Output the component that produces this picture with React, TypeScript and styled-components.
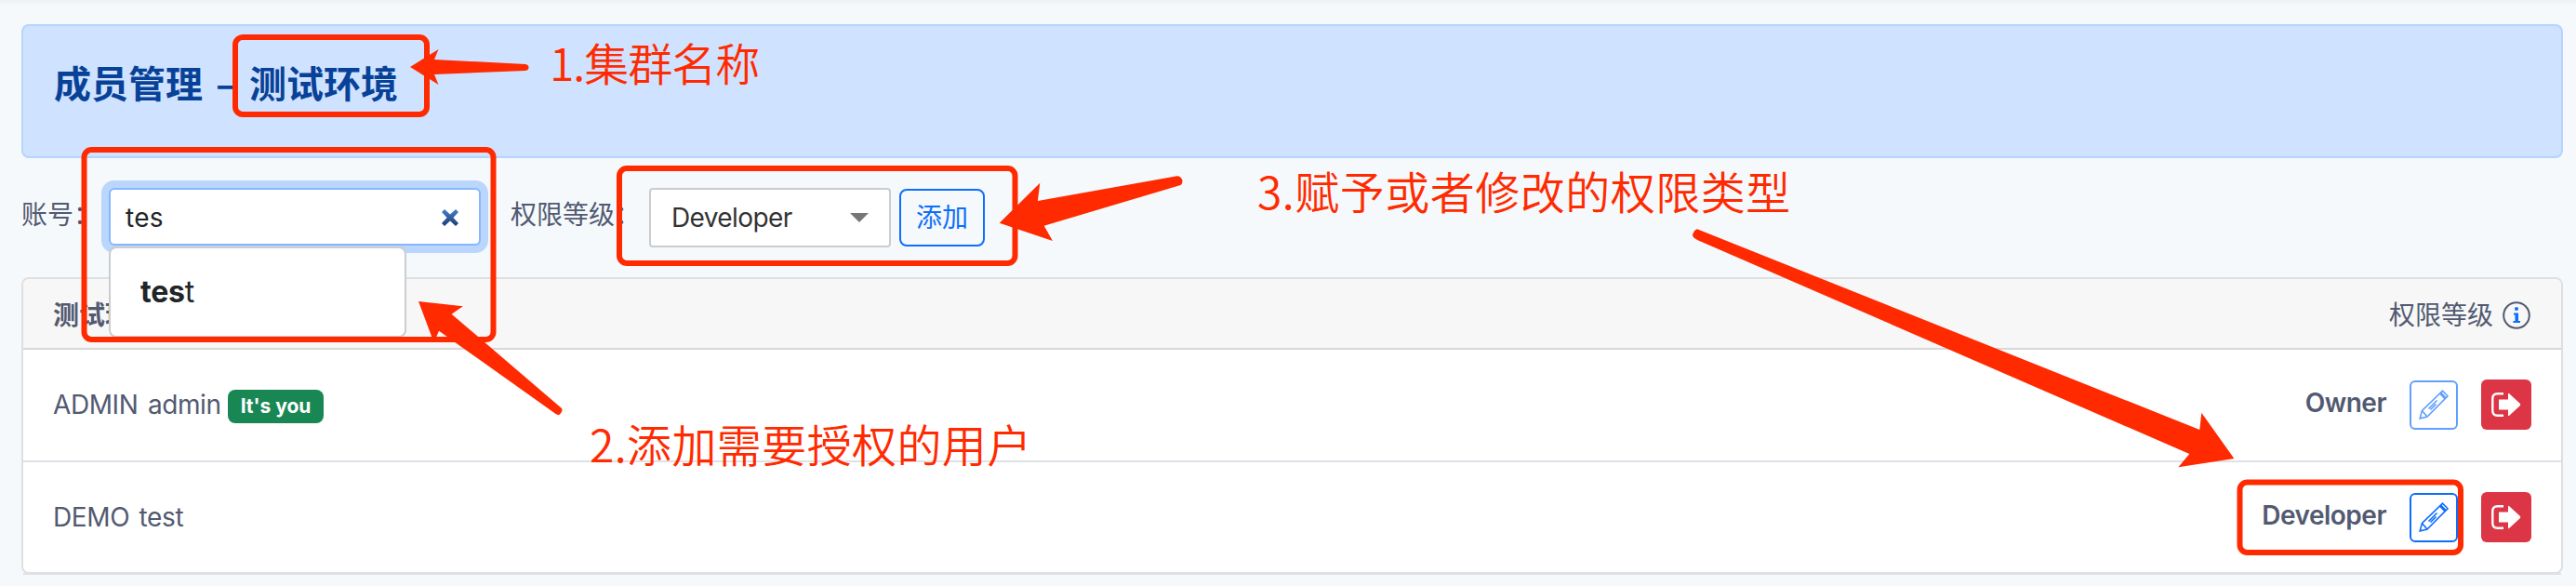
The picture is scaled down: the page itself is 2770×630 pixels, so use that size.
import styled, { createGlobalStyle } from "styled-components";

const ink = "#525a71";
const marker = "#ff2a00";

interface Member {
  name: string;
  level: string;
  isYou?: boolean;
}

const members: Member[] = [
  { name: "ADMIN admin", level: "Owner", isYou: true },
  { name: "DEMO test", level: "Developer" },
];

const PencilIcon = () => (
  <svg width="32" height="32" viewBox="0 0 32 32" fill="none" stroke="currentColor" strokeWidth="1.6">
    <path d="M1.2 30.8 L3.5 22.5 L25.5 1.2 L31 6.8 L9 29 Z" />
    <path d="M3.5 22.5 L9 29 M22.5 4 L28 9.8 M23.6 3 L29.1 8.7 M10.5 20.5 L19.5 11.5 M12.5 21.5 L18.5 15.5" />
  </svg>
);

const ExitIcon = () => (
  <svg width="32" height="26" viewBox="0 0 32 26" fill="none">
    <path d="M13 1.3 H6.5 Q1.3 1.3 1.3 6.5 V19.5 Q1.3 24.7 6.5 24.7 H13" stroke="#fff" strokeWidth="2.4" />
    <path d="M8 7.5 H18 V1.5 Q18 .5 19 1 L31 12 Q31.5 13 31 14 L19 25 Q18 25.5 18 24.5 V18.5 H8 Z" fill="#fff" />
  </svg>
);

const InfoIcon = () => (
  <svg width="30" height="30" viewBox="0 0 30 30" fill="none">
    <circle cx="15" cy="15" r="13.8" stroke={ink} strokeWidth="2" />
    <circle cx="15" cy="8" r="2.1" fill="#0d6efd" />
    <path d="M12 12.5 H17 V21 H19 V23 H11.5 V21 H13.5 V14.5 H12 Z" fill="#0d6efd" />
  </svg>
);

const App = () => (
  <>
    <GlobalStyle />
    <Page>
      <Banner>
        <h1>成员管理 – 测试环境</h1>
      </Banner>
      <Toolbar>
        <Label $width={94}>账号：</Label>
        <SearchBox>
          <span>tes</span>
          <svg width="20" height="20" viewBox="0 0 20 20">
            <defs>
              <linearGradient id="clear" x1="0" y1="0" x2="0" y2="1">
                <stop offset="0" stopColor="#4480d0" />
                <stop offset="1" stopColor="#1d3c70" />
              </linearGradient>
            </defs>
            <path d="M4 1 L10 6.6 L16 1 L19 4 L13.4 10 L19 16 L16 19 L10 13.4 L4 19 L1 16 L6.6 10 L1 4 Z" fill="url(#clear)" />
          </svg>
          <Suggestions>
            <b>tes</b>t
          </Suggestions>
        </SearchBox>
        <Label $width={149}>权限等级：</Label>
        <Select>
          Developer
          <Caret />
        </Select>
        <AddButton>添加</AddButton>
      </Toolbar>
      <Card>
        <CardHeader>
          <b>测试环境</b>
          <span>权限等级</span>
          <InfoIcon />
        </CardHeader>
        {members.map((member) => (
          <Row key={member.name}>
            <Name>{member.name}</Name>
            {member.isYou && <Badge>It's you</Badge>}
            <Level>{member.level}</Level>
            <EditButton disabled={member.isYou}>
              <PencilIcon />
            </EditButton>
            <RemoveButton>
              <ExitIcon />
            </RemoveButton>
          </Row>
        ))}
      </Card>
    </Page>
    <Overlay width="2770" height="630" viewBox="0 0 2770 630">
      <g fill="none" stroke={marker} strokeWidth="6">
        <rect x="253" y="40" width="206" height="83" rx="8" />
        <rect x="90.5" y="161" width="440" height="204" rx="8" />
        <rect x="666" y="181" width="425.5" height="102" rx="8" />
        <rect x="2408.5" y="518.5" width="237.5" height="75.5" rx="8" />
      </g>
      <g fill={marker}>
        <path d="M441 72 L471.5 53 L467 64 L565 69 Q568.5 69.5 568.5 72.5 Q568.5 75.5 565 76 L467 80 L471.5 91 Z" />
        <path d="M450 324 L497.8 329.3 L485.6 337.7 L604 439 Q606 442 601 446.3 L598 445.3 L472 355.7 L466.6 368.3 Z" />
        <path d="M1074.7 239.7 L1118.3 196.7 L1115.9 216 L1265.7 189.3 Q1270 189.5 1271.5 194 Q1271.5 198 1269.5 199 L1122.7 242.7 L1131.9 259 Z" />
        <path d="M2402.4 493 L2367.3 443.7 L2365.3 462 L1825 246.3 Q1822 247 1820 252.3 Q1820 256 1825.7 258.3 L2354.3 488 L2342.4 502.3 Z" />
      </g>
    </Overlay>
    <Note $left={591} $top={31} $spacing={-1}>1.集群名称</Note>
    <Note $left={634} $top={441} $spacing={0.4}>2.添加需要授权的用户</Note>
    <Note $left={1352} $top={169} $spacing={0.5}>3.赋予或者修改的权限类型</Note>
  </>
);

export default App;

const GlobalStyle = createGlobalStyle`
  * {
    box-sizing: border-box;
  }

  body {
    margin: 0;
    background: #f5f9fc;
    color: ${ink};
    font: 28px/42px Inter, "Noto Sans CJK SC", sans-serif;
  }

  button {
    padding: 0;
    font: inherit;
  }
`;

const Page = styled.div`
  height: 630px;
  padding: 26px 14px 0 23px;
  background: linear-gradient(#edf1f4, #f5f9fc 6px);
`;

const Banner = styled.header`
  height: 144px;
  padding: 36px 33px;
  border: 2px solid #b6d4fe;
  border-radius: 8px;
  background: #cfe2ff;

  & h1 {
    margin: 0;
    color: #084298;
    font: 700 40px/48px "Noto Sans CJK SC", sans-serif;
    word-spacing: 5px;
  }
`;

const Toolbar = styled.div`
  display: flex;
  height: 128px;
  padding-top: 32px;
`;

const Label = styled.div<{ $width: number }>`
  width: ${({ $width }) => $width}px;
  padding-top: 8px;
  white-space: nowrap;
`;

const SearchBox = styled.div`
  position: relative;
  display: flex;
  align-items: center;
  justify-content: space-between;
  width: 400px;
  height: 62px;
  margin-right: 32px;
  padding: 1px 21px 0 16px;
  border: 2px solid #86b7fe;
  border-radius: 6px;
  background: #fff;
  box-shadow: 0 0 0 8px rgba(13, 110, 253, 0.25);
  color: #212529;
  letter-spacing: 0.3px;
`;

const Suggestions = styled.div`
  position: absolute;
  top: 61px;
  left: -2px;
  width: 320px;
  height: 98px;
  padding: 26px 32px;
  border: 2px solid #cccdcf;
  border-radius: 8px;
  background: #fff;
  font-size: 32px;
  letter-spacing: -0.2px;

  & b {
    font-weight: 650;
  }
`;

const Select = styled.div`
  display: flex;
  align-items: center;
  justify-content: space-between;
  width: 260px;
  height: 64px;
  margin-right: 9px;
  padding: 0 22px;
  border: 2px solid #ccc;
  border-radius: 4px;
  background: #fff;
  color: #333;
  letter-spacing: -0.6px;
`;

const Caret = styled.i`
  border: 10px solid transparent;
  border-top-color: #777;
  border-bottom: 0;
`;

const AddButton = styled.button`
  width: 92px;
  height: 62px;
  margin-top: 1px;
  border: 2px solid #0d6efd;
  border-radius: 8px;
  background: transparent;
  color: #0d6efd;
`;

const Card = styled.section`
  height: 319px;
  border: 2px solid #dfdfdf;
  border-radius: 8px;
  background: #fff;
`;

const CardHeader = styled.div`
  display: flex;
  align-items: center;
  height: 76px;
  padding: 4px 33px 0 32px;
  border-bottom: 2px solid #d8d8d8;
  border-radius: 6px 6px 0 0;
  background: #f7f7f7;

  & span {
    margin: 0 10px 0 auto;
  }
`;

const Row = styled.div`
  display: flex;
  align-items: center;
  height: 121px;
  padding: 0 32px 1px;
  border-bottom: 2px solid #dee2e6;
`;

const Name = styled.span`
  margin-right: 7px;
  letter-spacing: -0.4px;
  word-spacing: 3px;
`;

const Badge = styled.span`
  height: 36px;
  margin-top: 4px;
  padding: 0 14px;
  border-radius: 8px;
  background: #198754;
  color: #fff;
  font-size: 21px;
  font-weight: 700;
  line-height: 36px;
`;

const Level = styled.span`
  margin: 0 25px 4px auto;
  font-weight: 600;
  letter-spacing: -0.5px;
`;

const EditButton = styled.button`
  display: grid;
  place-items: center;
  width: 52px;
  height: 53px;
  margin-right: 25px;
  border: 2px solid #0d6efd;
  border-radius: 6px;
  background: transparent;
  color: #0d6efd;

  &:disabled {
    opacity: 0.65;
  }
`;

const RemoveButton = styled.button`
  display: grid;
  place-items: center;
  width: 54px;
  height: 54px;
  border: 0;
  border-radius: 6px;
  background: #dc3545;
`;

const Overlay = styled.svg`
  position: absolute;
  top: 0;
  left: 0;
`;

const Note = styled.div<{ $left: number; $top: number; $spacing: number }>`
  position: absolute;
  top: ${({ $top }) => $top}px;
  left: ${({ $left }) => $left}px;
  color: ${marker};
  font: 350 48px/70px "Noto Sans CJK SC", sans-serif;
  letter-spacing: ${({ $spacing }) => $spacing}px;
  white-space: nowrap;
`;
